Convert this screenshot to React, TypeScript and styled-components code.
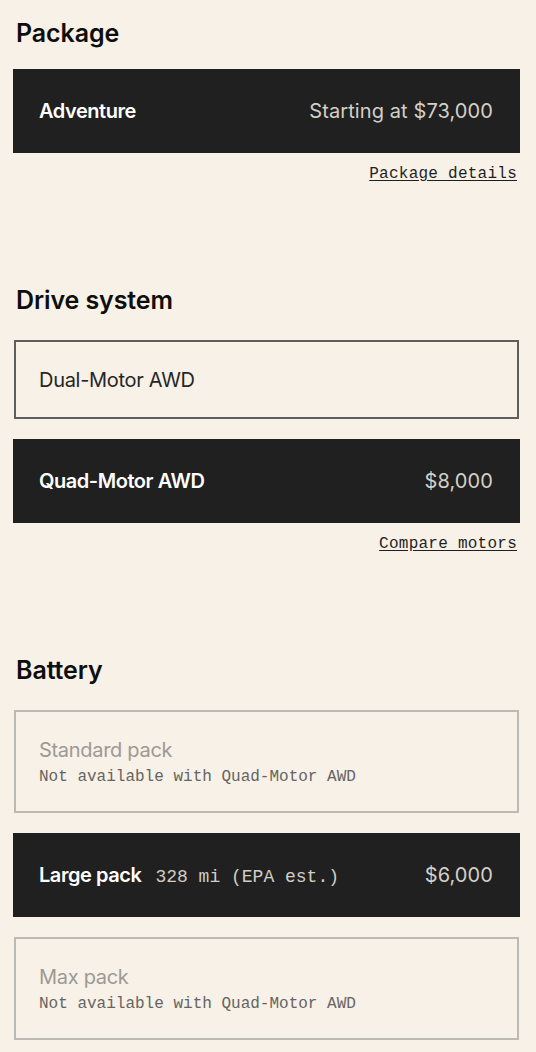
import React from "react";
import styled, { createGlobalStyle } from "styled-components";

const Global = createGlobalStyle`
  html, body { margin: 0; padding: 0; background: #f7f1e7; }
  body { font-family: Inter, "Noto Sans", sans-serif; color: #1f1f1f; }
  * { box-sizing: border-box; }
`;

const MONO = `"Liberation Mono", "DejaVu Sans Mono", monospace`;

const Page = styled.main`
  display: flex;
  flex-direction: column;
  padding: 17px 16px 13px 13px;
  background: #f7f1e7;
`;

const Section = styled.section<{ $last?: boolean }>`
  display: flex;
  flex-direction: column;
  margin-bottom: ${(p) => (p.$last ? "0" : "100px")};
`;

const Heading = styled.h2<{ $tight?: boolean }>`
  margin: 0 0 ${(p) => (p.$tight ? "20px" : "24px")} 3px;
  font-size: 25px;
  line-height: 32px;
  font-weight: 600;
  letter-spacing: -0.1px;
  color: #0e0e0e;
`;

const List = styled.div`
  display: flex;
  flex-direction: column;
  gap: 20px;
`;

type Variant = "selected" | "default" | "disabled";

const Card = styled.div<{ $variant: Variant }>`
  display: flex;
  align-items: ${(p) => (p.$variant === "disabled" ? "stretch" : "center")};
  flex-direction: ${(p) => (p.$variant === "disabled" ? "column" : "row")};
  justify-content: ${(p) => (p.$variant === "disabled" ? "center" : "space-between")};
  min-height: ${(p) => (p.$variant === "selected" ? "84px" : p.$variant === "default" ? "79px" : "103px")};
  margin: ${(p) => (p.$variant === "selected" ? "0" : "0 1px")};
  padding: ${(p) => (p.$variant === "selected" ? "0 27px 0 26px" : "0 23px")};
  background: ${(p) => (p.$variant === "selected" ? "#202020" : "transparent")};
  border: ${(p) =>
    p.$variant === "selected"
      ? "none"
      : p.$variant === "default"
      ? "2px solid #5e5e5c"
      : "2px solid #bcbab4"};
`;

const TitleRow = styled.div`
  display: flex;
  align-items: baseline;
  gap: 14px;
`;

const Title = styled.span<{ $variant: Variant }>`
  font-size: 20px;
  line-height: 28px;
  font-weight: ${(p) => (p.$variant === "selected" ? 600 : 400)};
  letter-spacing: ${(p) => (p.$variant === "selected" ? "-0.45px" : "-0.3px")};
  color: ${(p) => (p.$variant === "selected" ? "#ffffff" : p.$variant === "default" ? "#262626" : "#9c9994")};
`;

const Spec = styled.span`
  font-family: ${MONO};
  font-size: 18px;
  color: #d2cec6;
`;

const Price = styled.span`
  font-size: 20px;
  line-height: 28px;
  letter-spacing: 0.1px;
  color: #d4d0c8;
`;

const Note = styled.span`
  margin-top: 2px;
  font-family: ${MONO};
  font-size: 16px;
  line-height: 22px;
  color: #656462;
`;

const Link = styled.a`
  align-self: flex-end;
  margin: 11px 3px 0 0;
  font-family: ${MONO};
  font-size: 16px;
  line-height: 20px;
  letter-spacing: 0.25px;
  color: #1f1f1f;
  text-decoration: underline;
  text-underline-offset: 2px;
  cursor: pointer;
`;

export default function App() {
  return (
    <>
      <Global />
      <Page>
        <Section>
          <Heading $tight>Package</Heading>
          <List>
            <Card $variant="selected">
              <Title $variant="selected">Adventure</Title>
              <Price>Starting at $73,000</Price>
            </Card>
          </List>
          <Link>Package details</Link>
        </Section>

        <Section>
          <Heading>Drive system</Heading>
          <List>
            <Card $variant="default">
              <Title $variant="default">Dual-Motor AWD</Title>
            </Card>
            <Card $variant="selected">
              <Title $variant="selected">Quad-Motor AWD</Title>
              <Price>$8,000</Price>
            </Card>
          </List>
          <Link>Compare motors</Link>
        </Section>

        <Section $last>
          <Heading>Battery</Heading>
          <List>
            <Card $variant="disabled">
              <Title $variant="disabled">Standard pack</Title>
              <Note>Not available with Quad-Motor AWD</Note>
            </Card>
            <Card $variant="selected">
              <TitleRow>
                <Title $variant="selected">Large pack</Title>
                <Spec>328 mi (EPA est.)</Spec>
              </TitleRow>
              <Price>$6,000</Price>
            </Card>
            <Card $variant="disabled">
              <Title $variant="disabled">Max pack</Title>
              <Note>Not available with Quad-Motor AWD</Note>
            </Card>
          </List>
        </Section>
      </Page>
    </>
  );
}
